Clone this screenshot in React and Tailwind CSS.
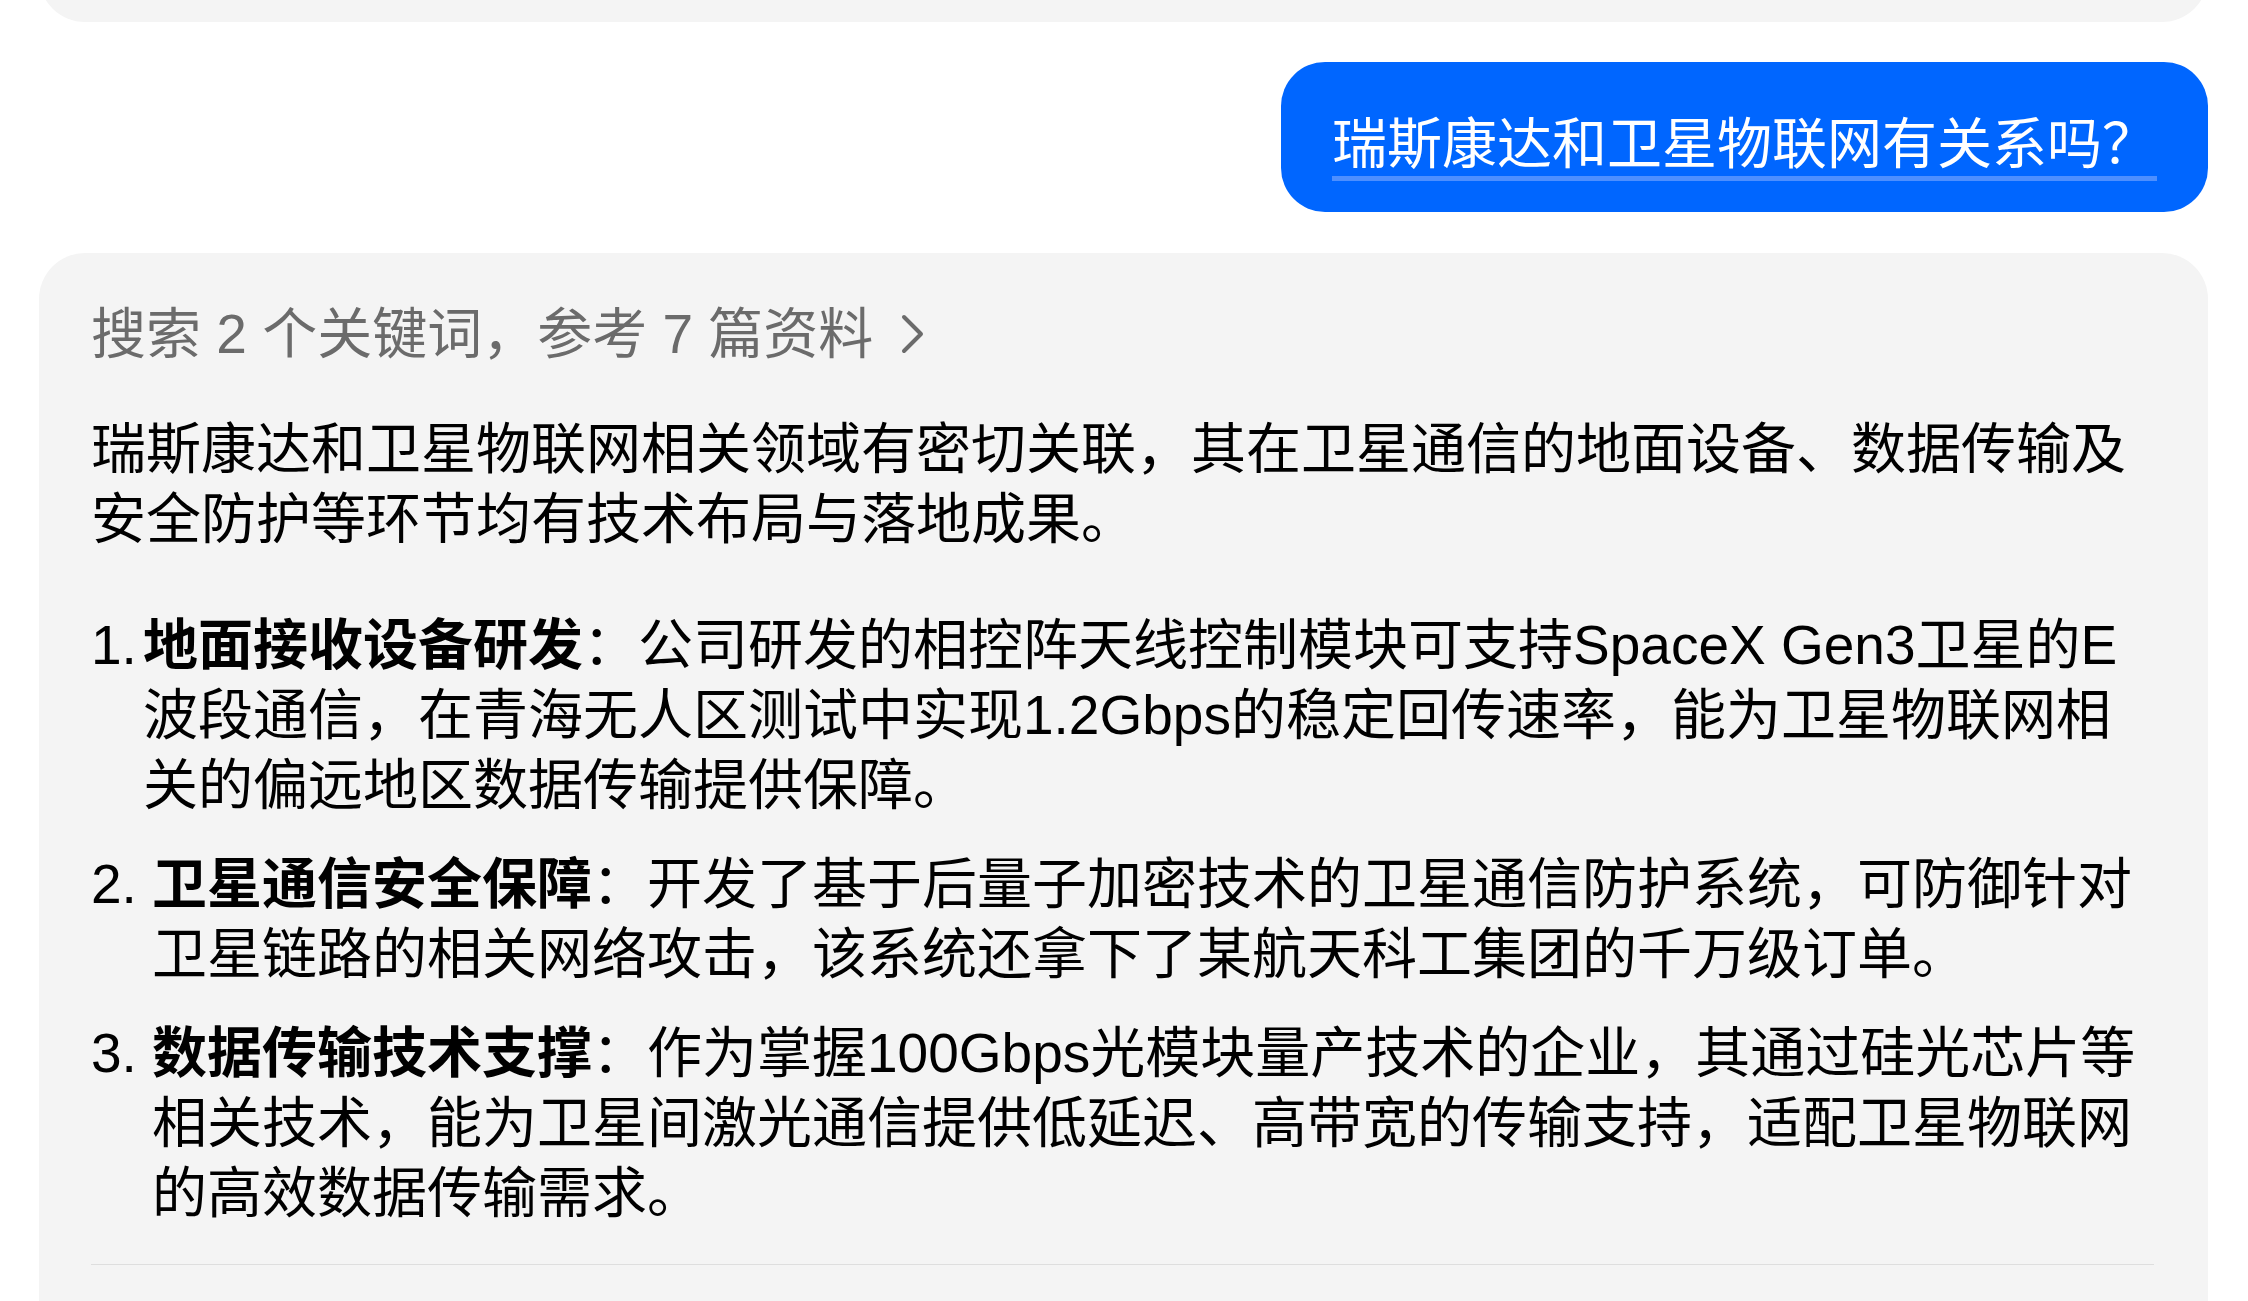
import React from 'react';

const items = [
  {
    n: '1.',
    w: 'w-[52px]',
    title: '地面接收设备研发',
    lines: [
      '公司研发的相控阵天线控制模块可支持SpaceX Gen3卫星的E',
      '波段通信，在青海无人区测试中实现1.2Gbps的稳定回传速率，能为卫星物联网相',
      '关的偏远地区数据传输提供保障。',
    ],
  },
  {
    n: '2.',
    w: 'w-[61px]',
    title: '卫星通信安全保障',
    lines: [
      '开发了基于后量子加密技术的卫星通信防护系统，可防御针对',
      '卫星链路的相关网络攻击，该系统还拿下了某航天科工集团的千万级订单。',
    ],
  },
  {
    n: '3.',
    w: 'w-[61px]',
    title: '数据传输技术支撑',
    lines: [
      '作为掌握100Gbps光模块量产技术的企业，其通过硅光芯片等',
      '相关技术，能为卫星间激光通信提供低延迟、高带宽的传输支持，适配卫星物联网',
      '的高效数据传输需求。',
    ],
  },
];

function Chevron() {
  return (
    <svg width="26" height="42" viewBox="0 0 26 42" className="ml-[27px] shrink-0">
      <path d="M4 4 L21 21 L4 38" fill="none" stroke="#6b6b6b" strokeWidth="4" strokeLinecap="round" strokeLinejoin="round" />
    </svg>
  );
}

function ListItem({ item }) {
  return (
    <li className="flex">
      <span className={`${item.w} shrink-0`}>{item.n}</span>
      <div className="whitespace-nowrap">
        <span className="font-bold">{item.title}</span>
        ：{item.lines[0]}
        {item.lines.slice(1).map((l, i) => (
          <React.Fragment key={i}>
            <br />
            {l}
          </React.Fragment>
        ))}
      </div>
    </li>
  );
}

export default function App() {
  return (
    <div className="w-[2248px] h-[1301px] overflow-hidden bg-white font-['Liberation_Sans','Noto_Sans_CJK_SC',sans-serif]">
      <div className="flex flex-col pl-[39px] pr-[40px] -mt-[98px]">
        {/* previous answer, scrolled off */}
        <div className="h-[120px] rounded-[46px] bg-[#f4f4f4]" />

        {/* user question */}
        <div className="self-end mt-[40px] rounded-[44px] bg-[#0066ff] px-[51px] pt-[55px] pb-[31px]">
          <span className="inline-block whitespace-nowrap text-[55px] leading-[55px] text-white pb-[4px] border-b-[5px] border-[#4d8fff]">
            瑞斯康达和卫星物联网有关系吗？
          </span>
        </div>

        {/* answer */}
        <div className="mt-[41px] rounded-[46px] bg-[#f4f4f4] pl-[52px] pr-[54px] pt-[46px] pb-[80px] text-[55px] leading-[70px] text-black">
          <div className="flex items-center text-[#6b6b6b] whitespace-nowrap">
            <span>搜索 2 个关键词，参考 7 篇资料</span>
            <Chevron />
          </div>

          <p className="mt-[45px] whitespace-nowrap">
            瑞斯康达和卫星物联网相关领域有密切关联，其在卫星通信的地面设备、数据传输及
            <br />
            安全防护等环节均有技术布局与落地成果。
          </p>

          <ol className="mt-[56px] flex flex-col gap-[29px]">
            {items.map((it) => (
              <ListItem key={it.n} item={it} />
            ))}
          </ol>

          <div className="mt-[36px] h-px bg-[#dedede]" />
        </div>
      </div>
    </div>
  );
}
